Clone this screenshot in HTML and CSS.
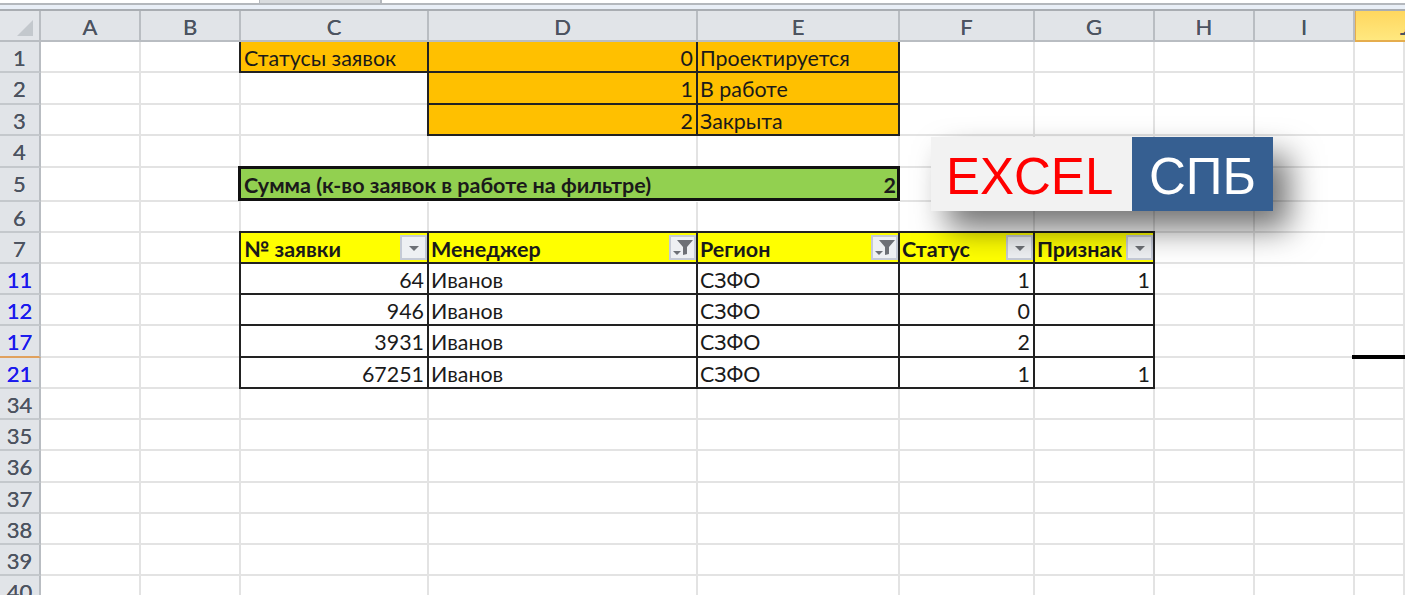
FILE: index.html
```html
<!DOCTYPE html>
<html lang="ru">
<head>
<meta charset="utf-8">
<title>Excel</title>
<link rel="stylesheet" href="styles.css">
</head>
<body>
<div class="topbar"><div class="top-row"><div class="formula"></div><div class="fxbtn"></div><div class="formula2"></div></div></div>
<div class="sheet">
  <div class="corner"><svg width="18" height="18" viewBox="0 0 18 18"><path d="M17 1V17H1Z" fill="#c3c8cd"/></svg></div>
  <div class="ch">A</div><div class="ch">B</div><div class="ch">C</div><div class="ch">D</div><div class="ch">E</div><div class="ch">F</div><div class="ch">G</div><div class="ch">H</div><div class="ch">I</div><div class="ch sel">J</div>

  <div class="rh">1</div><div class="c"></div><div class="c"></div><div class="c or bl bb br">Статусы заявок</div><div class="c or r br bb">0</div><div class="c or br bb">Проектируется</div><div class="c"></div><div class="c"></div><div class="c"></div><div class="c"></div><div class="c"></div>
  <div class="rh">2</div><div class="c"></div><div class="c"></div><div class="c"></div><div class="c or r bl br bb">1</div><div class="c or br bb">В работе</div><div class="c"></div><div class="c"></div><div class="c"></div><div class="c"></div><div class="c"></div>
  <div class="rh">3</div><div class="c"></div><div class="c"></div><div class="c"></div><div class="c or r bl br bb">2</div><div class="c or br bb">Закрыта</div><div class="c"></div><div class="c"></div><div class="c"></div><div class="c"></div><div class="c"></div>
  <div class="rh">4</div><div class="c"></div><div class="c"></div><div class="c"></div><div class="c"></div><div class="c"></div><div class="c"></div><div class="c"></div><div class="c"></div><div class="c"></div><div class="c"></div>
  <div class="rh">5</div><div class="c"></div><div class="c"></div><div class="sum"><span>Сумма (к-во заявок в работе на фильтре)</span><span>2</span></div><div class="c"></div><div class="c"></div><div class="c"></div><div class="c"></div><div class="c"></div>
  <div class="rh">6</div><div class="c"></div><div class="c"></div><div class="c"></div><div class="c"></div><div class="c"></div><div class="c"></div><div class="c"></div><div class="c"></div><div class="c"></div><div class="c"></div>
  <div class="rh">7</div><div class="c"></div><div class="c"></div>
  <div class="c hd hd-first"><span>№ заявки</span><i class="fb"><svg width="14" height="14" viewBox="0 0 14 14"><path d="M2 5H12L7 10Z" fill="#6d7076"/></svg></i></div>
  <div class="c hd"><span>Менеджер</span><i class="fb"><svg width="22" height="21" viewBox="0 0 22 21"><path d="M5 3H21L15 10V17L11 18V10Z" fill="#6d7076"/><path d="M1 14H9L5 18Z" fill="#6d7076"/></svg></i></div>
  <div class="c hd"><span>Регион</span><i class="fb"><svg width="22" height="21" viewBox="0 0 22 21"><path d="M5 3H21L15 10V17L11 18V10Z" fill="#6d7076"/><path d="M1 14H9L5 18Z" fill="#6d7076"/></svg></i></div>
  <div class="c hd"><span>Статус</span><i class="fb"><svg width="14" height="14" viewBox="0 0 14 14"><path d="M2 5H12L7 10Z" fill="#6d7076"/></svg></i></div>
  <div class="c hd"><span>Признак</span><i class="fb"><svg width="14" height="14" viewBox="0 0 14 14"><path d="M2 5H12L7 10Z" fill="#6d7076"/></svg></i></div>
  <div class="c"></div><div class="c"></div><div class="c"></div>

  <div class="rh blue">11</div><div class="c"></div><div class="c"></div><div class="c t r bl">64</div><div class="c t">Иванов</div><div class="c t">СЗФО</div><div class="c t r">1</div><div class="c t r">1</div><div class="c"></div><div class="c"></div><div class="c"></div>
  <div class="rh blue">12</div><div class="c"></div><div class="c"></div><div class="c t r bl">946</div><div class="c t">Иванов</div><div class="c t">СЗФО</div><div class="c t r">0</div><div class="c t r"></div><div class="c"></div><div class="c"></div><div class="c"></div>
  <div class="rh blue hid">17</div><div class="c"></div><div class="c"></div><div class="c t r bl">3931</div><div class="c t">Иванов</div><div class="c t">СЗФО</div><div class="c t r">2</div><div class="c t r"></div><div class="c"></div><div class="c"></div><div class="c mark"></div>
  <div class="rh blue">21</div><div class="c"></div><div class="c"></div><div class="c t r bl">67251</div><div class="c t">Иванов</div><div class="c t">СЗФО</div><div class="c t r">1</div><div class="c t r">1</div><div class="c"></div><div class="c"></div><div class="c"></div>

  <div class="rh">34</div><div class="c"></div><div class="c"></div><div class="c"></div><div class="c"></div><div class="c"></div><div class="c"></div><div class="c"></div><div class="c"></div><div class="c"></div><div class="c"></div>
  <div class="rh">35</div><div class="c"></div><div class="c"></div><div class="c"></div><div class="c"></div><div class="c"></div><div class="c"></div><div class="c"></div><div class="c"></div><div class="c"></div><div class="c"></div>
  <div class="rh">36</div><div class="c"></div><div class="c"></div><div class="c"></div><div class="c"></div><div class="c"></div><div class="c"></div><div class="c"></div><div class="c"></div><div class="c"></div><div class="c"></div>
  <div class="rh">37</div><div class="c"></div><div class="c"></div><div class="c"></div><div class="c"></div><div class="c"></div><div class="c"></div><div class="c"></div><div class="c"></div><div class="c"></div><div class="c"></div>
  <div class="rh">38</div><div class="c"></div><div class="c"></div><div class="c"></div><div class="c"></div><div class="c"></div><div class="c"></div><div class="c"></div><div class="c"></div><div class="c"></div><div class="c"></div>
  <div class="rh">39</div><div class="c"></div><div class="c"></div><div class="c"></div><div class="c"></div><div class="c"></div><div class="c"></div><div class="c"></div><div class="c"></div><div class="c"></div><div class="c"></div>
  <div class="rh">40</div><div class="c"></div><div class="c"></div><div class="c"></div><div class="c"></div><div class="c"></div><div class="c"></div><div class="c"></div><div class="c"></div><div class="c"></div><div class="c"></div>
</div>
<div class="logo"><div class="logo-l">EXCEL</div><div class="logo-r">СПБ</div></div>
</body>
</html>
```
FILE: styles.css
```css
* { box-sizing: border-box; }
html, body { margin: 0; padding: 0; width: 1405px; height: 595px; overflow: hidden; background: #fff; }
body { font-family: "Lato", "Open Sans", sans-serif; color: #1a1a1a; position: relative; }
.topbar { height: 11px; background: #e9eff7; border-bottom: 2px solid #a9adb2; }
.top-row { height: 5px; display: flex; background: #fff; border-bottom: 2px solid #b4b8bd; }
.formula { width: 259px; }
.fxbtn { width: 123px; background: #d9dcdf; border-left: 1px solid #b4b8bd; border-right: 2px solid #b4b8bd; }
.formula2 { flex: 1; }
.sheet {
  display: grid;
  grid-template-columns: 41px 100px 100px 188px 269px 202px 135px 120px 100px 100px 50px;
  grid-template-rows: 31px 31px 32px 31px 32px 34px 31px 31px 31px 31px 32px 31px 31px 31px 32px 31px 31px 31px 31px;
  font-size: 21.4px;
}
.corner { background: #e2e5e9; border-right: 2px solid #b9bdc2; border-bottom: 2px solid #b9bdc2; display: flex; align-items: flex-end; justify-content: flex-end; padding: 0 5px 3px 0; }
.ch { background: #e1e4e8; border-right: 2px solid #b9bdc2; border-bottom: 2px solid #b9bdc2; text-align: center; line-height: 31px; font-size: 22px; color: #4c5360; text-shadow: 0 0 .6px #4c5360; }
.ch.sel { background: linear-gradient(#ffd75f, #ffe87f); border-left: 1px solid #e5ad4d; border-bottom-color: #e5ad4d; border-right: 0; text-align: left; padding-left: 44px; }
.rh { background: #e1e4e8; border-right: 2px solid #b9bdc2; border-bottom: 2px solid #c4c8cc; text-align: center; line-height: 32px; font-size: 22px; color: #4c5360; text-shadow: 0 0 .6px #4c5360; }
.rh.blue { color: #1a1aee; text-shadow: 0 0 .6px #1a1aee; }
.rh.hid { border-bottom-color: #e0a15d; }
.c { border-right: 2px solid #e3e3e3; border-bottom: 2px solid #e3e3e3; padding: 0 3px 0 2px; line-height: 32px; white-space: nowrap; overflow: hidden; }
.r { text-align: right; }
.or { background: #ffc000; }
.br { border-right-color: #222; }
.bb { border-bottom-color: #222; }
.bl { box-shadow: -2px 0 0 #222; overflow: visible; padding-left: 3px; }
.sum { grid-column: span 3; background: #92d050; border: 3px solid #111; margin: -2px 0 1px -3px; display: flex; justify-content: space-between; align-items: center; padding: 2px 1px 0 3px; font-weight: 700; font-size: 21.5px; }
.hd { background: #ffff00; font-weight: 700; font-size: 21.5px; line-height: 33px; border-right-color: #222; border-bottom-color: #222; display: flex; justify-content: space-between; padding-right: 0; box-shadow: 0 -2px 0 #222; overflow: visible; }
.hd-first { box-shadow: -2px 0 0 #222, 0 -2px 0 #222, -2px -2px 0 #222; padding-left: 3px; }
.fb { width: 27px; height: 25px; margin-top: 2px; background: #eef0f3; border: 2px solid #c5cad6; display: flex; align-items: center; justify-content: center; flex: none; }
.t { border-right-color: #222; border-bottom-color: #222; }
.mark { position: relative; overflow: visible; }
.mark::after { content: ""; position: absolute; left: -3px; right: -3px; bottom: -3px; height: 4px; background: #000; }
.logo { position: absolute; left: 931px; top: 137px; width: 342px; height: 74px; display: flex; box-shadow: 16px 18px 32px rgba(0,0,0,.55); font-family: "Liberation Sans", Arial, sans-serif; font-size: 51px; }
.logo-l { width: 201px; background: #f2f2f2; color: #ff0000; line-height: 80px; padding-left: 15px; }
.logo-r { flex: 1; background: #365f91; color: #fff; line-height: 80px; padding-left: 17px; }
```
